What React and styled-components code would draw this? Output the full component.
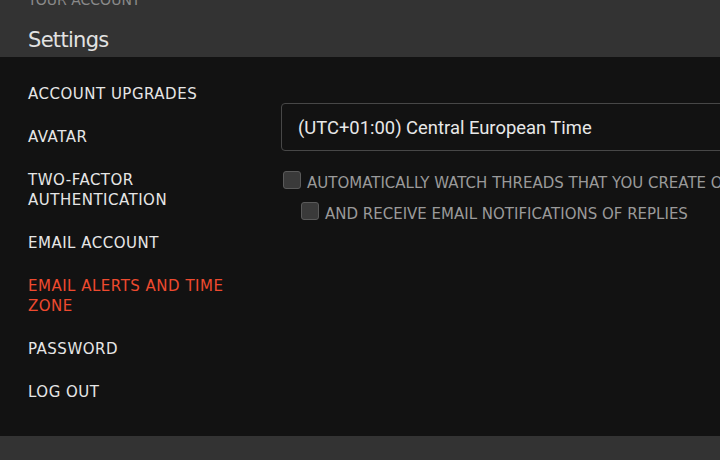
import React from "react";
import styled, { createGlobalStyle } from "styled-components";

const Global = createGlobalStyle`
  html, body { margin: 0; padding: 0; background: #121212; }
  body { width: 720px; height: 460px; overflow: hidden; }
  #root { width: 720px; height: 460px; overflow: hidden; }
`;

const Page = styled.div`
  display: flex;
  flex-direction: column;
  width: 720px;
  height: 460px;
  font-family: "DejaVu Sans", sans-serif;
`;

const Header = styled.header`
  background: #333333;
  height: 57px;
  box-sizing: border-box;
  padding: 0 28px;
  display: flex;
  flex-direction: column;
  overflow: hidden;
`;

const Crumb = styled.div`
  margin-top: -10px;
  height: 20px;
  font-size: 14px;
  line-height: 20px;
  color: #8a8a8a;
  text-transform: uppercase;
`;

const Title = styled.h1`
  margin: 17px 0 0;
  font-size: 21px;
  line-height: 26px;
  font-weight: normal;
  color: #e2e2e2;
  letter-spacing: -0.7px;
`;

const Main = styled.main`
  flex: 1;
  background: #121212;
  display: flex;
  gap: 53px;
  padding: 0 0 0 28px;
  overflow: hidden;
`;

const Nav = styled.nav`
  width: 200px;
  flex-shrink: 0;
  display: flex;
  flex-direction: column;
  gap: 23px;
  padding-top: 27px;
`;

const NavItem = styled.a`
  display: block;
  font-size: 15px;
  line-height: 20px;
  letter-spacing: 0.5px;
  text-transform: uppercase;
  color: ${(p) => (p.$active ? "#ee4a2f" : "#e6e6e6")};
  text-decoration: none;
`;

const Content = styled.section`
  flex-shrink: 0;
  width: 600px;
  padding-top: 46px;
  display: flex;
  flex-direction: column;
`;

const Select = styled.div`
  box-sizing: border-box;
  height: 48px;
  width: 600px;
  border: 1px solid #474747;
  border-radius: 4px;
  display: flex;
  align-items: center;
  padding: 0 16px;
  font-family: Roboto, sans-serif;
  font-size: 18.4px;
  color: #e8e8e8;
`;

const CheckRow = styled.label`
  display: flex;
  align-items: center;
  gap: 6px;
  margin-left: ${(p) => p.$indent || 2}px;
  margin-top: ${(p) => p.$top}px;
  white-space: nowrap;
  font-size: 15px;
  line-height: 20px;
  color: #9a9a9a;
  text-transform: uppercase;
`;

const Box = styled.span`
  box-sizing: border-box;
  width: 18px;
  height: 18px;
  border: 1px solid #5a5a5a;
  border-radius: 3px;
  background: #3a3a3a;
  flex-shrink: 0;
  margin-top: -7px;
`;

const Footer = styled.footer`
  height: 24px;
  background: #333333;
`;

const items = [
  "Account upgrades",
  "Avatar",
  "Two-factor authentication",
  "Email account",
  "Email alerts and time zone",
  "Password",
  "Log out",
];

export default function App() {
  return (
    <>
      <Global />
      <Page>
        <Header>
          <Crumb>Your account</Crumb>
          <Title>Settings</Title>
        </Header>
        <Main>
          <Nav>
            {items.map((t) => (
              <NavItem key={t} $active={t.startsWith("Email alerts")}>
                {t}
              </NavItem>
            ))}
          </Nav>
          <Content>
            <Select>(UTC+01:00) Central European Time</Select>
            <CheckRow $top={22}>
              <Box />
              Automatically watch threads that you create or reply to
            </CheckRow>
            <CheckRow $indent={20} $top={11}>
              <Box />
              And receive email notifications of replies
            </CheckRow>
          </Content>
        </Main>
        <Footer />
      </Page>
    </>
  );
}
